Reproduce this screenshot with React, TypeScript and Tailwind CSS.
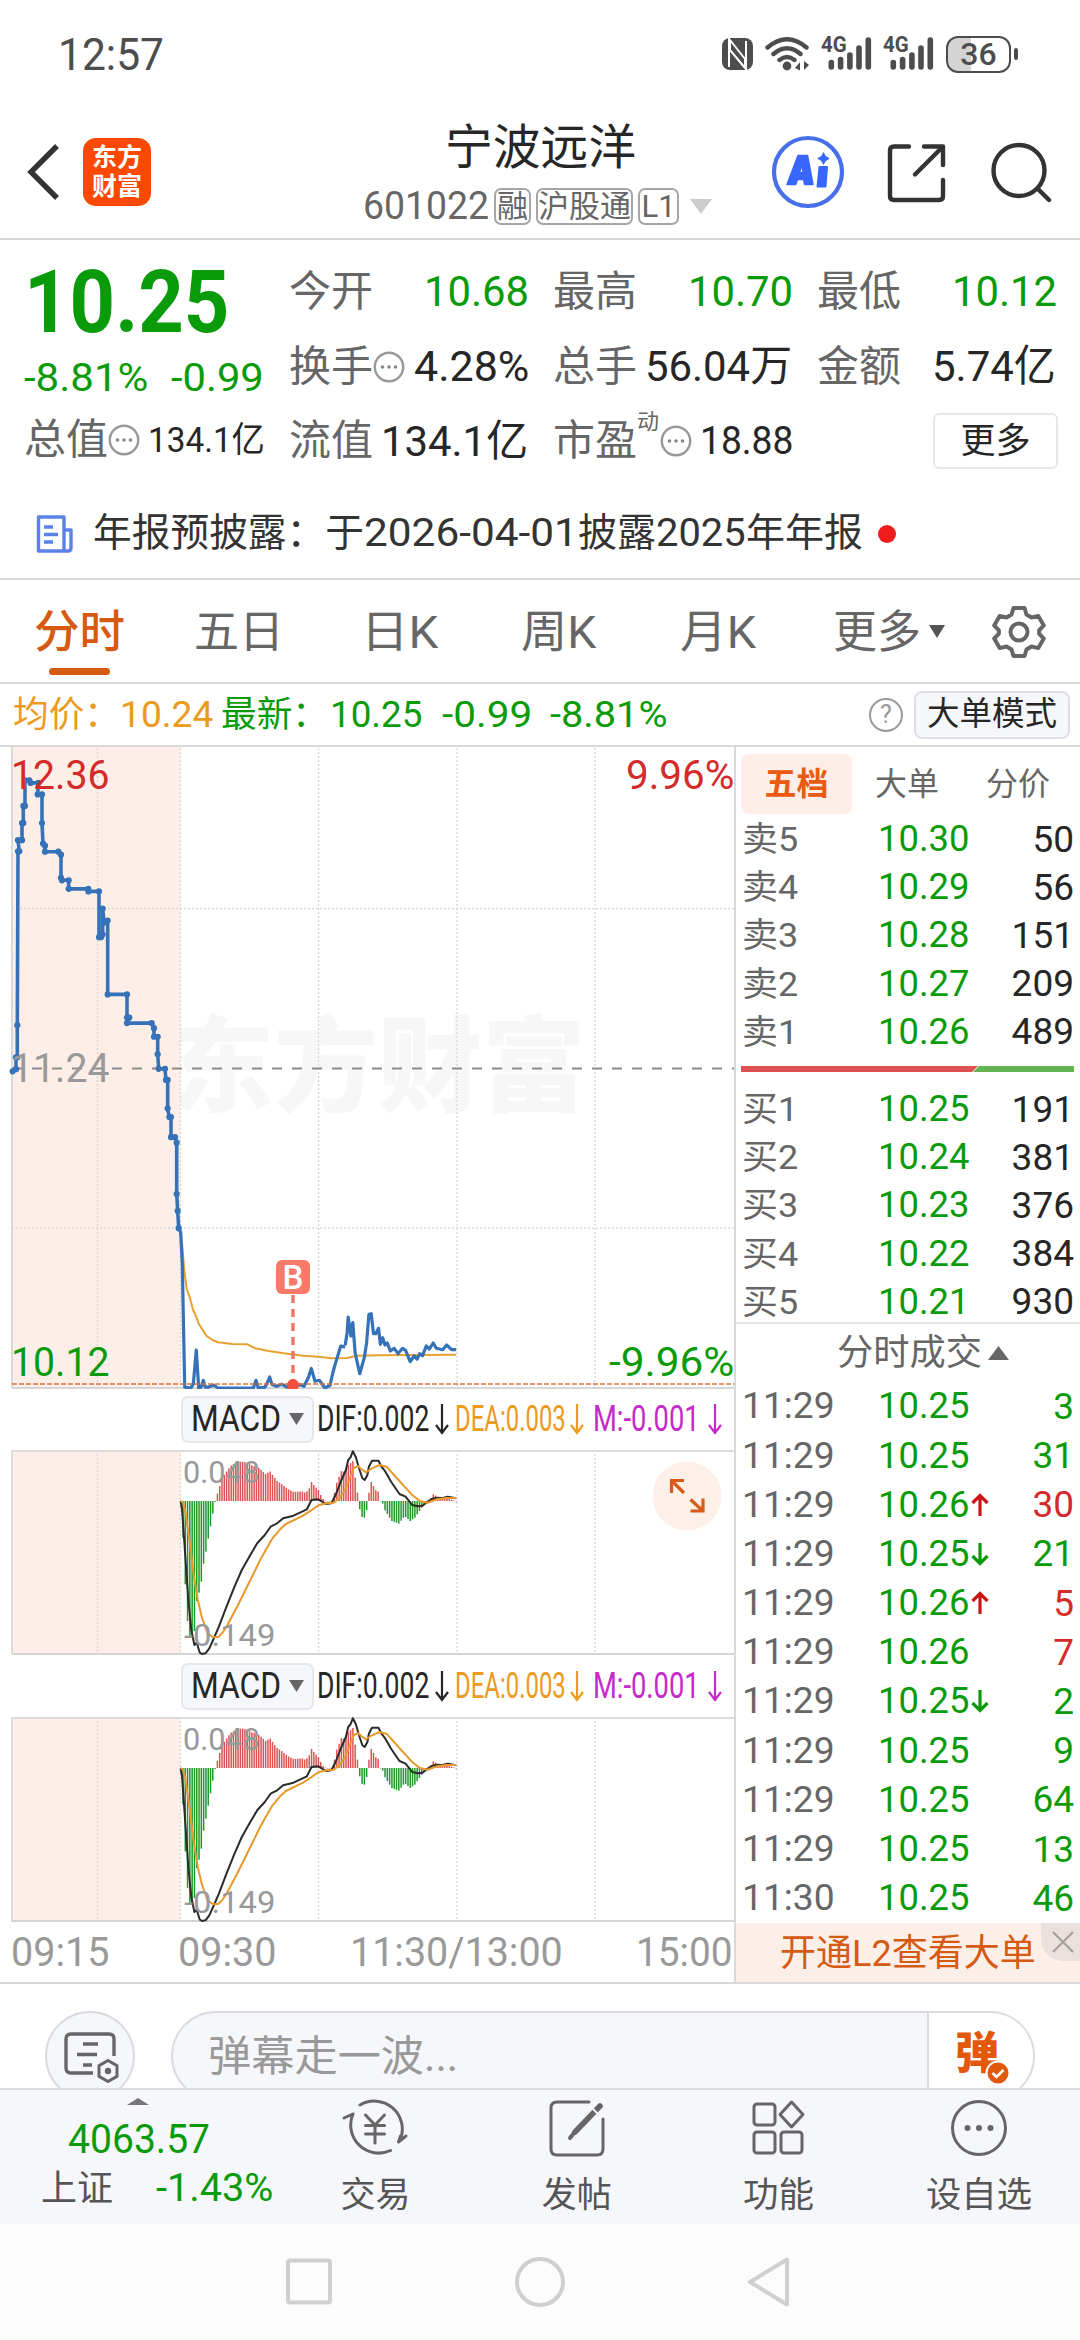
import { useLayoutEffect, useRef, type ReactNode } from "react";

/* Single-line text that is condensed or widened to fill the width of its box. */
function Fit({ children, className = "" }: { children: ReactNode; className?: string }) {
  const box = useRef<HTMLSpanElement>(null);
  const text = useRef<HTMLSpanElement>(null);
  useLayoutEffect(() => {
    if (box.current && text.current) {
      const k = box.current.clientWidth / text.current.offsetWidth;
      text.current.style.transform = `scaleX(${k})`;
    }
  });
  return (
    <span ref={box} className={`block shrink-0 leading-none ${className}`}>
      <span ref={text} className="inline-block origin-left whitespace-nowrap leading-none">
        {children}
      </span>
    </span>
  );
}

type Pt = [number, number];
const path = (pts: Pt[], ox: number, oy: number, sx: number, sy: number) =>
  pts.map(([x, y], i) => `${i ? "L" : "M"}${(ox + x / sx).toFixed(1)} ${(oy + y / sy).toFixed(1)}`).join("");

const auction: Pt[] = [
  [38, 773], [48, 768], [48, 740], [52, 740], [52, 665], [54, 258], [58, 258], [54, 232], [66, 232], [66, 192], [70, 192], [70, 152],
  [75, 152], [75, 92], [88, 92], [92, 98], [115, 98], [113, 125], [126, 125], [126, 192], [129, 240], [135, 245], [135, 259],
  [175, 259], [183, 266], [183, 320], [186, 326], [206, 326], [206, 346], [265, 346], [265, 352], [297, 352], [297, 459],
  [303, 459], [308, 453], [308, 392], [312, 425], [323, 420], [323, 593], [381, 593], [381, 647], [388, 647], [381, 660],
  [455, 660], [462, 672], [462, 692], [473, 692], [473, 733], [476, 767], [495, 767], [498, 793], [503, 793], [503, 860],
  [508, 880], [513, 880], [513, 927], [525, 927], [530, 940], [530, 1060], [533, 1100], [536, 1140],
];
const open: Pt[] = [
  [536, 1140], [542, 1150], [547, 1225], [554, 1512], [572, 1514], [580, 1505], [589, 1425], [596, 1514], [603, 1512], [610, 1496],
  [616, 1512], [625, 1512], [640, 1507], [655, 1514], [760, 1514], [768, 1496], [775, 1514], [795, 1512], [803, 1500], [809, 1488],
  [816, 1506], [830, 1510], [845, 1505], [860, 1512], [890, 1508], [900, 1506], [912, 1510], [925, 1490], [934, 1468], [945, 1498],
  [958, 1496], [975, 1514], [990, 1508], [998, 1480], [1005, 1460], [1022, 1416], [1036, 1418],
];
const morning: Pt[] = [
  [510, 493], [515, 455], [518, 408], [525, 465], [530, 425], [536, 515], [548, 578], [560, 530], [566, 485], [572, 400], [578, 398],
  [584, 458], [590, 458], [597, 442], [602, 490], [608, 470], [614, 492], [620, 486], [628, 510], [638, 502], [648, 518], [660, 502],
  [668, 508], [680, 542], [690, 525], [698, 534], [705, 518], [712, 524], [722, 495], [730, 504], [740, 486], [748, 502], [765, 506],
  [775, 492], [788, 506], [800, 506],
];
const average: Pt[] = [
  [78, 145], [84, 190], [90, 270], [96, 325], [103, 345], [112, 385], [120, 405], [128, 430], [148, 465], [165, 478], [178, 484],
  [215, 489], [255, 490], [275, 502], [310, 510], [350, 517], [400, 524], [440, 527], [475, 532], [515, 531], [540, 524],
  [600, 523], [700, 522], [800, 521],
];
const dif: Pt[] = [
  [80, 303], [84, 330], [90, 430], [100, 600], [108, 690], [116, 735], [122, 728], [130, 758], [136, 762], [145, 760], [155, 745],
  [165, 720], [180, 680], [200, 620], [220, 562], [240, 510], [262, 465], [270, 450], [280, 430], [300, 405], [315, 380], [332, 370],
  [348, 355], [375, 347], [410, 328], [422, 300], [440, 298], [450, 305], [460, 312], [474, 310], [485, 285], [500, 240], [512, 210],
  [518, 180], [524, 172], [530, 154], [538, 172], [546, 205], [555, 235], [561, 240], [568, 225], [572, 200], [580, 182], [597, 182],
  [605, 200], [615, 215], [630, 245], [652, 282], [668, 290], [685, 315], [700, 319], [712, 317], [722, 308], [735, 298], [748, 293],
  [765, 294], [778, 290], [800, 295],
];
const dea: Pt[] = [
  [80, 303], [86, 308], [92, 330], [104, 430], [115, 530], [125, 600], [135, 650], [150, 700], [165, 712], [180, 710], [190, 697],
  [200, 680], [230, 615], [260, 545], [290, 475], [320, 415], [340, 388], [355, 372], [400, 347], [420, 332], [440, 316], [460, 310],
  [480, 308], [495, 295], [510, 270], [520, 240], [532, 205], [543, 198], [552, 207], [565, 217], [580, 205], [600, 195], [618, 200],
  [640, 228], [665, 260], [685, 285], [705, 303], [725, 308], [750, 298], [775, 294], [800, 294],
];
const histogram: Pt[] = [
  [80, 0], [86, 110], [92, 250], [98, 360], [104, 405], [110, 405], [116, 390], [122, 300], [128, 275], [134, 242], [140, 188],
  [146, 152], [152, 113], [158, 76], [164, 38], [170, 3], [176, -22], [182, -45], [190, -72], [210, -105], [230, -118], [245, -118],
  [270, -105], [282, -102], [303, -80], [313, -90], [330, -62], [345, -50], [360, -36], [375, -27], [400, -29], [406, -24],
  [415, -35], [422, -57], [430, -45], [440, -33], [446, -18], [452, -6], [460, 0], [476, 0], [482, -25], [488, -55], [500, -90],
  [506, -88], [515, -105], [530, -120], [536, -70], [542, -25], [545, 0], [548, 25], [554, 48], [560, 50], [566, 27], [570, 0],
  [572, -25], [578, -57], [584, -45], [590, -32], [596, -28], [602, 0], [608, 8], [614, 28], [626, 50], [632, 60], [650, 68],
  [662, 50], [668, 48], [680, 60], [692, 50], [704, 30], [716, 10], [724, 0], [734, -8], [740, -20], [752, -12], [775, -8], [800, 0],
];
const barAt = (x: number) => {
  for (let i = 1; i < histogram.length; i++) {
    const [x1, v1] = histogram[i];
    const [x0, v0] = histogram[i - 1];
    if (x <= x1) return v0 + ((v1 - v0) * (x - x0)) / (x1 - x0);
  }
  return 0;
};

function Dots() {
  return (
    <svg className="h-8 w-8 shrink-0" viewBox="0 0 32 32">
      <circle cx="16" cy="16" r="14.2" fill="none" stroke="#999" strokeWidth="2.4" />
      <g fill="#888">
        <circle cx="9.5" cy="16" r="1.8" />
        <circle cx="16" cy="16" r="1.8" />
        <circle cx="22.5" cy="16" r="1.8" />
      </g>
    </svg>
  );
}

function Signal() {
  return (
    <div className="relative h-[36px] w-[51px] text-[#4d4d4d]">
      <svg viewBox="0 0 51 36" className="h-[36px] w-[51px]">
        <path d="M10.3 26.5V31M19.6 23.5V31M28.9 19V31M38 12V31M47.3 4V31" stroke="#4d4d4d" strokeWidth="5.6" strokeLinecap="round" />
      </svg>
      <Fit className="absolute left-0 top-[-2px] w-[26px] text-[22px] font-bold">4G</Fit>
    </div>
  );
}

function StatusBar() {
  return (
    <div className="flex h-[108px] items-center pl-[58px] text-[#4d4d4d]">
      <Fit className="w-[106px] text-[45px]">12:57</Fit>
      <svg viewBox="0 0 31 32" className="ml-[558px] h-8 w-[31px]">
        <rect width="31" height="32" rx="8" fill="#4d4d4d" />
        <path d="M7 0V29M24 3V32" stroke="#fff" strokeWidth="2" />
        <path d="M8 2L23 21V30L8 12z" fill="#4d4d4d" stroke="#fff" strokeWidth="2" strokeLinejoin="round" />
      </svg>
      <svg viewBox="0 0 44 34" className="ml-[12px] h-[34px] w-[44px]">
        <g fill="none" stroke="#4d4d4d" strokeWidth="4.400" strokeLinecap="round">
          <path d="M2.500 10.500Q22-6 41.500 10.500M8.500 17Q22 5.500 35.500 17M14.500 23Q22 17 29.500 23" />
        </g>
        <circle cx="22" cy="29" r="4.400" fill="#4d4d4d" />
        <path d="M30 31l5-6v8.500zM44 28l-5-4v9z" fill="#4d4d4d" />
      </svg>
      <div className="ml-[12px]"><Signal /></div>
      <div className="ml-[11px]"><Signal /></div>
      <div className="ml-[12px] flex h-[37px] w-[65px] items-center justify-center rounded-[12px] border-[2.500px] border-[#4d4d4d] bg-[linear-gradient(90deg,#d4d4d4_0_38%,#fff_38%)]">
        <span className="text-[32px] font-medium leading-none">36</span>
      </div>
      <div className="ml-[3px] h-[12px] w-[4px] rounded-sm bg-[#4d4d4d]" />
    </div>
  );
}

function Chip({ children, w }: { children: ReactNode; w: string }) {
  return (
    <span className={`${w} flex h-[37px] items-center justify-center rounded-[7px] border-2 border-[#a6a6a6] text-[31px] leading-none text-[#666]`}>
      {children}
    </span>
  );
}

function Header() {
  return (
    <header className="flex h-[132px] border-b-2 border-[#d9d9d9]">
      <svg viewBox="0 0 34 60" className="ml-[25px] mt-[34px] h-[60px] w-[34px]">
        <path d="M32 4L6 30l26 26" fill="none" stroke="#333" strokeWidth="5.400" />
      </svg>
      <div className="ml-[24px] mt-[30px] flex h-[68px] w-[68px] flex-col items-center justify-center gap-[2px] rounded-[13px] bg-[#fd4802] text-[25px] font-bold leading-[27px] text-white">
        <span>东方</span>
        <span>财富</span>
      </div>
      <div className="ml-[209px] flex w-[360px] flex-col">
        <div className="mt-[15px] flex h-[50px] items-center pl-[85px]">
          <Fit className="w-[191px] text-[48px] text-[#262626]">宁波远洋</Fit>
        </div>
        <div className="mt-[14px] flex h-[38px] items-center">
          <Fit className="ml-[3px] w-[126px] text-[38px] text-[#666]">601022</Fit>
          <span className="ml-[5px]"><Chip w="w-[37px]">融</Chip></span>
          <span className="ml-[5px]"><Chip w="w-[97px]">沪股通</Chip></span>
          <span className="ml-[5px]"><Chip w="w-[41px]">L1</Chip></span>
          <svg viewBox="0 0 22 15" className="ml-[11px] h-[15px] w-[22px]"><path d="M0 0h22L11 15z" fill="#ccc" /></svg>
        </div>
      </div>
      <svg viewBox="0 0 74 74" className="ml-[51px] mt-[27px] h-[74px] w-[74px]">
        <circle cx="37" cy="37" r="34" fill="none" stroke="#466fe8" strokeWidth="4.200" />
        <path d="M16 49.500L27 20.500h9.500L42 49.500h-8.500l-.8-5h-6.200l-1.800 5zM28.500 37.500h3.600l-1-8z" fill="#3866ff" stroke="#3866ff" strokeWidth="1.500" strokeLinejoin="round" />
        <path d="M48.500 32h7.500l-1.500 19.500h-8z" fill="#3866ff" stroke="#3866ff" strokeWidth="2" strokeLinejoin="round" />
        <path d="M52.500 17l2.300 4 4 2.500-4 2.500-2.300 4-2.300-4-4-2.500 4-2.500z" fill="#3866ff" />
      </svg>
      <svg viewBox="0 0 60 60" className="ml-[42px] mt-[35px] h-[60px] w-[60px]" fill="none" stroke="#333" strokeWidth="4.400" strokeLinecap="round" strokeLinejoin="round">
        <path d="M22 3.500H7q-4 0-4 4V53q0 4 4 4H52q4 0 4-4V37M37 3.500H56V22M56 3.500L28 31.500" />
      </svg>
      <svg viewBox="0 0 62 62" className="ml-[43px] mt-[34px] h-[62px] w-[62px]" fill="none" stroke="#333" strokeWidth="4.400" strokeLinecap="round">
        <circle cx="29" cy="28.500" r="25.500" />
        <path d="M48 47l11 11" />
      </svg>
    </header>
  );
}

function Label({ children }: { children: ReactNode }) {
  return <Fit className="w-[84px] text-[42px] text-[#666]">{children}</Fit>;
}

const G = "text-[#0a9b0a]";

function Quote() {
  return (
    <section className="grid h-[233px] grid-cols-[240px_239px_239px_239px] gap-x-[25px] pl-[24px] pt-[14px]">
      <div className="flex flex-col">
        <div className="flex h-[96px] items-center">
          <Fit className={`w-[205px] text-[88px] font-bold ${G}`}>10.25</Fit>
        </div>
        <div className={`flex h-[57px] items-center justify-between text-[39px] ${G}`}>
          <Fit className="w-[124px]">-8.81%</Fit>
          <Fit className="w-[93px]">-0.99</Fit>
        </div>
        <div className="mt-[-4px] flex h-[74px] items-center">
          <Fit className="w-[84px] text-[42px] text-[#666]">总值</Fit>
          <Dots />
          <Fit className="ml-[8px] w-[117px] text-[35px] text-[#262626]">134.1亿</Fit>
        </div>
      </div>
      <div className="flex flex-col">
        <div className="flex h-[75px] items-center justify-between"><Label>今开</Label><Fit className={`mr-[-1px] w-[105px] text-[43px] ${G}`}>10.68</Fit></div>
        <div className="flex h-[75px] items-center">
          <Label>换手</Label><Dots />
          <Fit className="ml-auto mr-[-1px] w-[115px] text-[43px] text-[#262626]">4.28%</Fit>
        </div>
        <div className="flex h-[74px] items-center justify-between"><Label>流值</Label><Fit className="w-[147px] text-[43px] text-[#262626]">134.1亿</Fit></div>
      </div>
      <div className="flex flex-col">
        <div className="flex h-[75px] items-center justify-between"><Label>最高</Label><Fit className={`mr-[-1px] w-[105px] text-[43px] ${G}`}>10.70</Fit></div>
        <div className="flex h-[75px] items-center justify-between"><Label>总手</Label><Fit className="w-[147px] text-[43px] text-[#262626]">56.04万</Fit></div>
        <div className="flex h-[74px] items-center">
          <Label>市盈</Label>
          <span className="mb-[38px] w-[23px] text-[22px] leading-none text-[#666]">动</span>
          <Dots />
          <Fit className="ml-auto mr-[-1px] w-[93px] text-[38px] text-[#262626]">18.88</Fit>
        </div>
      </div>
      <div className="flex flex-col">
        <div className="flex h-[75px] items-center justify-between"><Label>最低</Label><Fit className={`mr-[-1px] w-[105px] text-[43px] ${G}`}>10.12</Fit></div>
        <div className="flex h-[75px] items-center justify-between"><Label>金额</Label><Fit className="w-[124px] text-[43px] text-[#262626]">5.74亿</Fit></div>
        <div className="flex h-[74px] items-center justify-end">
          <button className="mr-[-2px] flex h-[56px] w-[125px] items-center justify-center rounded-[6px] border-2 border-[#e8e8e8] text-[35px] leading-none text-[#262626]">更多</button>
        </div>
      </div>
    </section>
  );
}

function Notice() {
  return (
    <section className="flex h-[107px] items-center border-b-2 border-[#d9d9d9] pl-[36px] pt-[16px]">
      <svg viewBox="0 0 38 38" className="h-[38px] w-[38px]" fill="none" stroke="#5b82e6" strokeWidth="3.400">
        <path d="M2.500 2h25.500v34H2.500zM28 15h7v18q0 3-3 3h-4M8 12h9M8 19.500h14M8 27h9" strokeLinejoin="round" />
      </svg>
      <div className="ml-[19px] flex text-[39px] text-[#333]">
        <Fit className="w-[271px]">年报预披露：于</Fit>
        <Fit className="w-[214px]">2026-04-01</Fit>
        <Fit className="w-[78px]">披露</Fit>
        <Fit className="w-[90px]">2025</Fit>
        <Fit className="w-[117px]">年年报</Fit>
      </div>
      <span className="ml-[15px] h-[18px] w-[18px] rounded-full bg-[#ee1c1c]" />
    </section>
  );
}

function Tabs() {
  return (
    <nav className="flex h-[104px] border-b-2 border-[#d9d9d9] text-[45px] text-[#666]">
      <div className="ml-[34px] flex w-[91px] flex-col items-center">
        <Fit className="mt-[30px] w-[91px] font-medium text-[#d65a12]">分时</Fit>
        <span className="mt-[13px] h-[7px] w-[61px] rounded-full bg-[#d65a12]" />
      </div>
      <Fit className="ml-[69px] mt-[30px] w-[90px]">五日</Fit>
      <Fit className="ml-[77px] mt-[30px] w-[77px]">日K</Fit>
      <Fit className="ml-[83px] mt-[30px] w-[75px]">周K</Fit>
      <Fit className="ml-[84px] mt-[30px] w-[76px]">月K</Fit>
      <Fit className="ml-[77px] mt-[30px] w-[88px]">更多</Fit>
      <svg viewBox="0 0 16 13" className="ml-[8px] mt-[45px] h-[13px] w-[16px]"><path d="M0 0h16L8 13z" fill="#555" /></svg>
      <svg viewBox="0 0 54 54" className="ml-[47px] mt-[25px] h-[54px] w-[54px]" fill="none" stroke="#666" strokeWidth="4" strokeLinejoin="round">
        <path d="M21.500 3h11l2 6.500 5 3 6.800-1.600 5.500 9.500-4.700 5v3.200l4.700 5-5.500 9.500-6.800-1.600-5 3-2 6.500h-11l-2-6.500-5-3-6.800 1.600-5.500-9.500 4.700-5v-3.200l-4.700-5 5.500-9.500 6.800 1.600 5-3z" />
        <circle cx="27" cy="27" r="8.500" />
      </svg>
    </nav>
  );
}

function InfoRow() {
  return (
    <div className={`flex h-[63px] items-center border-b-2 border-[#d9d9d9] pl-[13px] text-[36px] ${G}`}>
      <Fit className="w-[107px] text-[#ec9a20]">均价：</Fit>
      <Fit className="w-[93px] text-[#ec9a20]">10.24</Fit>
      <Fit className="ml-[8px] w-[107px]">最新：</Fit>
      <Fit className="ml-[2px] w-[92px]">10.25</Fit>
      <Fit className="ml-[20px] w-[90px]">-0.99</Fit>
      <Fit className="ml-[18px] w-[118px]">-8.81%</Fit>
      <span className="ml-[201px] flex h-[34px] w-[34px] items-center justify-center rounded-full border-[2.500px] border-[#999] text-[25px] leading-none text-[#999]">?</span>
      <span className="ml-[11px] flex h-[48px] w-[156px] items-center justify-center rounded-[8px] border-2 border-[#dddfe4] bg-[#f6f7fa] text-[32.500px] leading-none text-[#262626]">大单模式</span>
    </div>
  );
}

const GRID_X = [180.5, 318.5, 457, 595];

function PriceChart() {
  return (
    <div className="relative h-[641px]">
      <span className="absolute left-[170px] top-[270px] whitespace-nowrap text-[104px] font-black leading-none text-[#f7f7f7]">东方财富</span>
      <svg viewBox="0 746 734 642" className="absolute left-0 top-0 h-[642px] w-[734px]">
        <rect x="12" y="746" width="168.500" height="641" fill="#fdeee7" />
        <g stroke="#d6d6d6" strokeWidth="1.300" strokeDasharray="2 2">
          {[97.5, ...GRID_X].map((x) => <path key={x} d={`M${x} 747V1387`} />)}
          <path d="M12 907.500H734M12 1227H734" />
        </g>
        <path d="M12 746V1387" stroke="#d9d9d9" strokeWidth="2" />
        <path d="M12 1387H734" stroke="#d5d5d5" strokeWidth="2.200" />
        <path d="M12 1067.500H734" stroke="#8c8c8c" strokeWidth="2" strokeDasharray="10 10" />
        <g fill="none" strokeLinejoin="round">
          <path d={path(average, 150, 1180, 2.613, 3)} stroke="#e8a030" strokeWidth="2" />
          <path d={path([...auction], 0, 740, 3, 2.34)} stroke="#3572b8" strokeWidth="3.600" />
          <path d={path(open, 0, 740, 3, 2.34)} stroke="#3572b8" strokeWidth="3.200" />
          <path d={path(morning, 150, 1180, 2.613, 3)} stroke="#3572b8" strokeWidth="3.200" />
        </g>
        {auction.map(([x, y], i) => <circle key={i} cx={x / 3} cy={740 + y / 2.34} r="3.100" fill="#3572b8" />)}
        <path d="M12 1383H734" stroke="#dd7038" strokeWidth="1.500" strokeDasharray="5 2" />
        <path d="M293 1294V1380" stroke="#ee7468" strokeWidth="3.400" strokeDasharray="8 6" />
        <circle cx="293" cy="1384" r="6" fill="#f4503f" />
      </svg>
      <span className="absolute left-[276px] top-[513px] flex h-[34px] w-[34px] items-center justify-center rounded-[6px] bg-[#f87a6b] text-[33px] font-medium leading-none text-white">B</span>
      <Fit className="absolute left-[11px] top-[9px] w-[98px] text-[40px] text-[#d42a2a]">12.36</Fit>
      <Fit className="absolute left-[11px] top-[302px] w-[98px] text-[40px] text-[#999]">11.24</Fit>
      <Fit className={`absolute left-[11px] top-[596px] w-[98px] text-[40px] ${G}`}>10.12</Fit>
      <Fit className="absolute left-[626px] top-[9px] w-[108px] text-[40px] text-[#d42a2a]">9.96%</Fit>
      <Fit className={`absolute left-[609px] top-[596px] w-[125px] text-[40px] ${G}`}>-9.96%</Fit>
    </div>
  );
}

function DownArrow() {
  return (
    <svg viewBox="0 0 14 34" className="h-[34px] w-[14px]" fill="none" stroke="currentColor" strokeWidth="2.200">
      <path d="M7 2V31M1 23l6 8 6-8" />
    </svg>
  );
}

function MacdBar() {
  return (
    <div className="flex h-[62px] items-center pl-[181px] text-[36px] text-[#262626]">
      <span className="flex h-[47px] w-[133px] items-center rounded-[7px] border-2 border-[#e6e7ea] bg-[#f6f7fa]">
        <Fit className="ml-[8px] w-[90px]">MACD</Fit>
        <svg viewBox="0 0 15 12" className="ml-[8px] h-[12px] w-[15px]"><path d="M0 0h15L7.500 12z" fill="#666" /></svg>
      </span>
      <Fit className="ml-[3px] w-[112px]">DIF:0.002</Fit>
      <span className="ml-[6px]"><DownArrow /></span>
      <span className="ml-[6px] flex items-center text-[#ec9a20]">
        <Fit className="w-[111px]">DEA:0.003</Fit>
        <span className="ml-[4px]"><DownArrow /></span>
      </span>
      <span className="ml-[9px] flex items-center text-[#c42bc9]">
        <Fit className="w-[107px]">M:-0.001</Fit>
        <span className="ml-[8px]"><DownArrow /></span>
      </span>
    </div>
  );
}

function MacdChart({ expand }: { expand?: boolean }) {
  return (
    <div className="relative h-[205px]">
      <svg viewBox="0 1450 734 205" className="h-[205px] w-[734px]">
        <rect x="12" y="1450" width="168.500" height="205" fill="#fdeee7" />
        <g stroke="#d6d6d6" strokeWidth="1.300" strokeDasharray="2 2">
          {[97.5, ...GRID_X].map((x) => <path key={x} d={`M${x} 1450V1655`} />)}
        </g>
        <path d="M12 1451H734M12 1450V1655" stroke="#dcdcdc" strokeWidth="2" />
        <path d="M12 1654H734" stroke="#d5d5d5" strokeWidth="2" />
        {Array.from({ length: 121 }, (_, i) => {
          const x = 80 + i * 6;
          const h = barAt(x) / 3;
          return (
            <rect key={i} x={150 + x / 2.613 - 0.7} y={1501 + Math.min(0, h)} width="1.500" height={Math.max(0.6, Math.abs(h))} fill={h > 0 ? "#1f9a2a" : "#dd5454"} />
          );
        })}
        <g fill="none" strokeWidth="2" strokeLinejoin="round">
          <path d={path(dif, 150, 1400, 2.613, 3)} stroke="#2b2b2b" />
          <path d={path(dea, 150, 1400, 2.613, 3)} stroke="#e8992a" />
        </g>
      </svg>
      <Fit className="absolute left-[183px] top-[7px] w-[77px] text-[31px] text-[#999]">0.048</Fit>
      <Fit className="absolute left-[184px] top-[170px] w-[91px] text-[31px] text-[#999]">-0.149</Fit>
      {expand && (
        <svg viewBox="0 0 70 70" className="absolute left-[652px] top-[11px] h-[70px] w-[70px]">
          <circle cx="35" cy="35" r="34.500" fill="#fdf0e9" />
          <path d="M32 19.500H19.500V32M20 20L32 32M51 37.500V50H38.500M51 50L38.500 38.500" fill="none" stroke="#da5a18" strokeWidth="3.200" />
        </svg>
      )}
    </div>
  );
}

function TimeAxis() {
  return (
    <div className="flex h-[59px] items-center pl-[11px] pt-[2px] text-[40px] text-[#999]">
      <Fit className="w-[99px]">09:15</Fit>
      <Fit className="ml-[68px] w-[99px]">09:30</Fit>
      <Fit className="ml-[73px] w-[213px]">11:30/13:00</Fit>
      <Fit className="ml-[73px] w-[97px]">15:00</Fit>
    </div>
  );
}

function OrderRow({ name, price, vol }: { name: string; price: string; vol: string }) {
  return (
    <div className="flex h-[48.200px] items-center pl-[6px] pr-[6px] text-[36px]">
      <Fit className="w-[56px] text-[34px] text-[#666]">{name}</Fit>
      <Fit className={`ml-[80px] w-[91px] ${G}`}>{price}</Fit>
      <span className="ml-auto text-[37px] leading-none text-[#262626]">{vol}</span>
    </div>
  );
}

const sells = [["卖5", "10.30", "50"], ["卖4", "10.29", "56"], ["卖3", "10.28", "151"], ["卖2", "10.27", "209"], ["卖1", "10.26", "489"]];
const buys = [["买1", "10.25", "191"], ["买2", "10.24", "381"], ["买3", "10.23", "376"], ["买4", "10.22", "384"], ["买5", "10.21", "930"]];
const ticks: [string, string, string, string, boolean][] = [
  ["11:29", "10.25", "", "3", false],
  ["11:29", "10.25", "", "31", false],
  ["11:29", "10.26", "up", "30", true],
  ["11:29", "10.25", "down", "21", false],
  ["11:29", "10.26", "up", "5", true],
  ["11:29", "10.26", "", "7", true],
  ["11:29", "10.25", "down", "2", false],
  ["11:29", "10.25", "", "9", false],
  ["11:29", "10.25", "", "64", false],
  ["11:29", "10.25", "", "13", false],
  ["11:30", "10.25", "", "46", false],
];

function SidePanel() {
  return (
    <aside className="flex w-[346px] flex-col border-l-2 border-[#d9d9d9]">
      <div className="mt-[6px] flex h-[61px] items-center pl-[5px] text-[32px] leading-none text-[#666]">
        <span className="flex h-[60px] w-[111px] items-center justify-center rounded-[8px] bg-[#fdeee7] font-bold text-[#ea5a10]">五档</span>
        <span className="ml-[23px]">大单</span>
        <span className="ml-[47px]">分价</span>
      </div>
      <div className="mt-[1px] flex flex-col">
        {sells.map(([a, b, c]) => <OrderRow key={a} name={a} price={b} vol={c} />)}
      </div>
      <svg viewBox="0 0 333 6" className="ml-[5px] mt-[10px] h-[6px] w-[333px]">
        <path d="M0 0H237L231 6H0z" fill="#db5151" />
        <path d="M238 0H333V6H232z" fill="#62b550" />
      </svg>
      <div className="mt-[13px] flex flex-col">
        {buys.map(([a, b, c]) => <OrderRow key={a} name={a} price={b} vol={c} />)}
      </div>
      <div className="mt-[-4px] flex h-[60px] items-center border-t-2 border-[#e6e6e6] pl-[101px]">
        <Fit className="w-[145px] text-[36px] text-[#666]">分时成交</Fit>
        <svg viewBox="0 0 21 14" className="ml-[6px] h-[14px] w-[21px]"><path d="M10.500 0L21 14H0z" fill="#666" /></svg>
      </div>
      <div className="flex h-[541px] flex-col">
        {ticks.map(([t, p, dir, v, red], i) => (
          <div key={i} className="flex h-[49.180px] items-center pl-[6px] pr-[6px] text-[36px]">
            <Fit className="w-[93px] text-[#666]">{t}</Fit>
            <Fit className={`ml-[43px] w-[91px] ${G}`}>{p}</Fit>
            {dir && (
              <svg viewBox="0 0 18 24" className={dir === "up" ? "ml-[2px] h-6 w-[18px]" : "ml-[2px] h-6 w-[18px] rotate-180"} fill="none" stroke={dir === "up" ? "#cc1414" : "#0a9b0a"} strokeWidth="3.200">
                <path d="M9 23V2M1.500 10L9 2.500 16.500 10" />
              </svg>
            )}
            <span className={red ? "ml-auto text-[37px] leading-none text-[#d42a2a]" : "ml-auto text-[37px] leading-none text-[#0a9b0a]"}>{v}</span>
          </div>
        ))}
      </div>
      <div className="flex h-[59px] bg-[#fcefe8] pl-[44px]">
        <Fit className="mt-[12px] w-[256px] text-[37px] text-[#d65a12]">开通L2查看大单</Fit>
        <span className="ml-auto flex h-[38px] w-[39px] items-center justify-center rounded-bl-[22px] bg-[#ebe1dc]">
          <svg viewBox="0 0 22 22" className="ml-1 h-[22px] w-[22px]"><path d="M1 1L21 21M21 1L1 21" stroke="#a8a09c" strokeWidth="2.200" /></svg>
        </span>
      </div>
    </aside>
  );
}

function CommentBar() {
  return (
    <section className="flex h-[106px] overflow-hidden border-t-2 border-[#d9d9d9] pl-[45px] pt-[27px]">
      <div className="flex h-[90px] w-[90px] shrink-0 items-center justify-center rounded-full border-2 border-[#d9dbe0] bg-[#f6f7fa]">
        <svg viewBox="0 0 56 52" className="ml-[2px] mt-[2px] h-[52px] w-[56px]" fill="none" stroke="#666" strokeWidth="3.400">
          <path d="M30 42H8q-5 0-5-5V8q0-5 5-5H46q5 0 5 5V25M20 13H35M14 23.500H34M20 34H29" />
          <path d="M45 29.500l9 5.200v10.600l-9 5.200-9-5.200V34.700z" strokeWidth="3" />
          <circle cx="45" cy="40" r="3.200" fill="#666" stroke="none" />
        </svg>
      </div>
      <div className="ml-[36px] flex h-[90px] w-[864px] shrink-0 overflow-hidden rounded-full border-2 border-[#d9dbe0] bg-[#f6f7fa]">
        <Fit className="ml-[35px] mt-[23px] w-[250px] text-[42px] text-[#999]">弹幕走一波...</Fit>
        <div className="relative ml-auto h-full w-[106px] border-l-2 border-[#d9dbe0] bg-white">
          <span className="absolute left-[26px] top-[19px] text-[44px] font-black leading-none text-[#e4580c]">弹</span>
          <svg viewBox="0 0 26 26" className="absolute left-[56px] top-[47px] h-[26px] w-[26px]">
            <circle cx="13" cy="13" r="11.500" fill="#e4580c" stroke="#fff" strokeWidth="2" />
            <path d="M7.500 13l4 4 7-7" fill="none" stroke="#fff" strokeWidth="2.600" />
          </svg>
        </div>
      </div>
    </section>
  );
}

function NavItem({ label, w, children }: { label: string; w: string; children: ReactNode }) {
  return (
    <div className="flex w-[201.500px] flex-col items-center">
      <svg viewBox="0 0 66 62" className="mt-[7px] h-[62px] w-[66px]" fill="none" stroke="#666" strokeWidth="3" strokeLinecap="round" strokeLinejoin="round">
        {children}
      </svg>
      <Fit className={`${w} mt-[19px] text-[35px] text-[#555]`}>{label}</Fit>
    </div>
  );
}

function BottomBar() {
  return (
    <nav className="flex h-[136px] border-t-2 border-[#d9dbe0] bg-[#f6f7fa]">
      <div className="flex w-[275px] flex-col">
        <svg viewBox="0 0 22 7" className="ml-[127px] mt-[8px] h-[7px] w-[22px]"><path d="M0 7L11 0l11 7z" fill="#777" /></svg>
        <Fit className={`ml-[68px] mt-[14px] w-[142px] text-[41px] ${G}`}>4063.57</Fit>
        <div className="mt-[9px] flex items-center">
          <Fit className="ml-[41px] w-[72px] text-[36px] text-[#555]">上证</Fit>
          <Fit className={`ml-[43px] w-[117px] text-[39px] ${G}`}>-1.43%</Fit>
        </div>
      </div>
      <NavItem label="交易" w="w-[70px]">
        <path d="M18 8A28 28 0 0 1 58.500 42M48.500 53.500A28 28 0 0 1 11 17M2 21l9-4-1 3M64 39l-7.500 6 2-6" />
        <path d="M23.500 18L33 28l9.500-10M33 28V46M23.500 28.500H42.500M23.500 37H42.500" />
      </NavItem>
      <NavItem label="发帖" w="w-[70px]">
        <path d="M45 5H13q-6 0-6 6V52q0 6 6 6H53q6 0 6-6V22" />
        <path d="M56 9L31 35" strokeWidth="5.500" />
        <path d="M30 36l-4 5" strokeWidth="4" />
        <path d="M49 12l5 5" stroke="#f6f7fa" strokeWidth="2" />
      </NavItem>
      <NavItem label="功能" w="w-[71px]">
        <rect x="9" y="7" width="21" height="21" rx="3" />
        <path d="M46.500 5L58 17.500 46.500 30 35 17.500z" />
        <rect x="9" y="35" width="21" height="21" rx="3" />
        <rect x="36" y="35" width="21" height="21" rx="3" />
      </NavItem>
      <NavItem label="设自选" w="w-[106px]">
        <circle cx="33" cy="31" r="26.500" />
        <g fill="#666" stroke="none"><circle cx="21.500" cy="31" r="3" /><circle cx="33" cy="31" r="3" /><circle cx="44.500" cy="31" r="3" /></g>
      </NavItem>
    </nav>
  );
}

function SystemNav() {
  return (
    <div className="flex h-[116px] bg-[#fcfcfc] pt-[32px]">
      <svg viewBox="0 0 48 50" className="ml-[285px] h-[50px] w-[48px]"><rect x="3" y="4.500" width="42" height="42" rx="2" fill="none" stroke="#d0d0d0" strokeWidth="4" /></svg>
      <svg viewBox="0 0 52 52" className="ml-[181px] h-[52px] w-[52px]"><circle cx="26" cy="26" r="23" fill="none" stroke="#d0d0d0" strokeWidth="4" /></svg>
      <svg viewBox="0 0 44 52" className="ml-[181px] h-[52px] w-[44px]"><path d="M40 3.500v45L3 26z" fill="none" stroke="#d0d0d0" strokeWidth="4" strokeLinejoin="round" /></svg>
    </div>
  );
}

export default function App() {
  return (
    <div className="flex h-[2340px] w-[1080px] flex-col overflow-hidden bg-white font-['Roboto','Noto_Sans_CJK_SC',sans-serif]">
      <StatusBar />
      <Header />
      <Quote />
      <Notice />
      <Tabs />
      <InfoRow />
      <div className="flex h-[1235px]">
        <div className="flex w-[734px] flex-col">
          <PriceChart />
          <MacdBar />
          <MacdChart expand />
          <MacdBar />
          <MacdChart />
          <TimeAxis />
        </div>
        <SidePanel />
      </div>
      <CommentBar />
      <BottomBar />
      <SystemNav />
    </div>
  );
}
